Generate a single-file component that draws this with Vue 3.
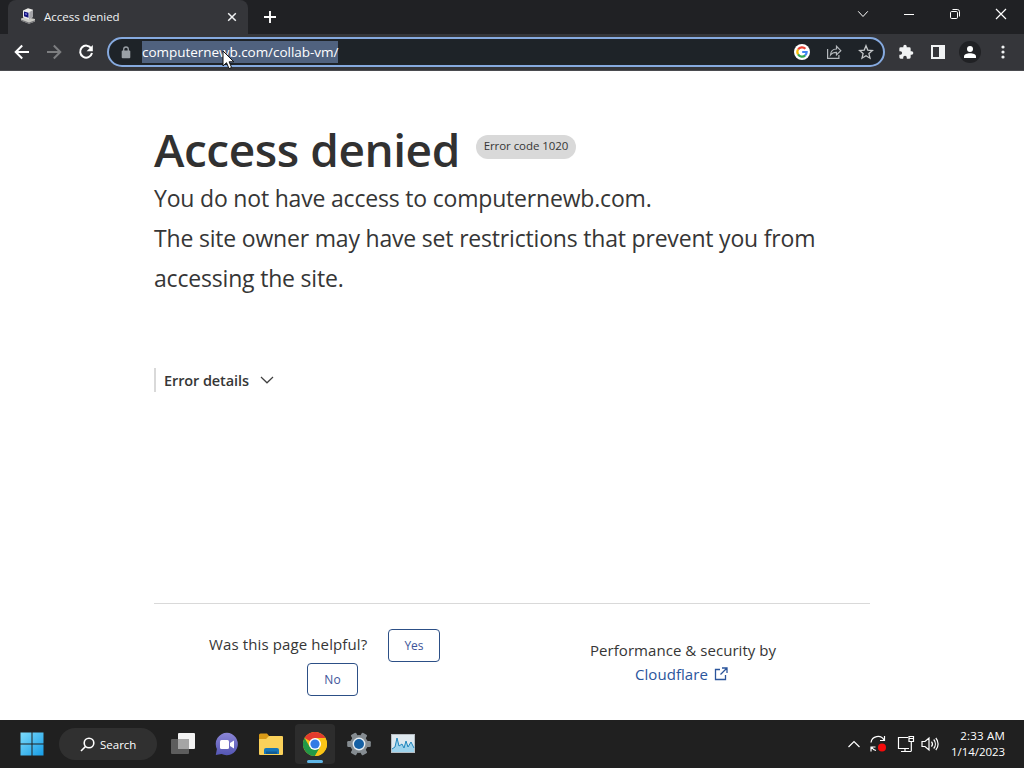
<template>
  <div class="screen">
    <header class="tabstrip">
      <div class="tab">
        <svg class="favicon" width="16" height="16" viewBox="0 0 16 16">
          <path d="M1 10.500l5-1.500 9 2v2.500l-6 2.300-8-3.300z" fill="#c9c9c4" />
          <path d="M1 11.500l8 3v1.300l-8-3zM9 14.500l6-2.300v1.300l-6 2.300z" fill="#77777a" />
          <path d="M3 2.500L8 .3l5 1.500v7L9 11.500 3 9.500z" fill="#ececea" />
          <path d="M9.500 4l3.500-2v7l-4 2.500z" fill="#a4a4a8" />
          <path d="M4 3.500l4.500 1.200v5L4 8.300z" fill="#15157c" />
          <path d="M5 5l2 .5v1.500L5 6.500z" fill="#7373df" />
        </svg>
        <span class="tab-title">Access denied</span>
        <svg class="tab-close" width="10" height="10" viewBox="0 0 10 10">
          <path d="M1.200 1.200l7.600 7.600M8.800 1.200L1.200 8.800" stroke="#f1f3f4" stroke-width="1.500" />
        </svg>
      </div>
      <svg class="new-tab" width="14" height="14" viewBox="0 0 14 14">
        <path d="M7 1v12M1 7h12" stroke="#fff" stroke-width="1.900" />
      </svg>
      <div class="window-controls">
        <span>
          <svg width="12" height="12" viewBox="0 0 12 12"><path d="M1.200 3.300L6 8.500l4.800-5.200" /></svg>
        </span>
        <span>
          <svg width="12" height="12" viewBox="0 0 12 12"><path d="M1 6.500h10" /></svg>
        </span>
        <span>
          <svg width="12" height="12" viewBox="0 0 12 12">
            <rect x="1.500" y="3.500" width="7" height="7" rx="1.200" />
            <path d="M3.500 1.500h4.800a2.200 2.200 0 0 1 2.200 2.200V8.500" />
          </svg>
        </span>
        <span>
          <svg width="12" height="12" viewBox="0 0 12 12"><path d="M1 1l10 10M11 1L1 11" stroke-width="1.200" /></svg>
        </span>
      </div>
    </header>

    <div class="toolbar">
      <div class="nav">
        <svg width="16" height="16" viewBox="0 0 16 16">
          <path d="M15 8H2M8.200 1.500L1.700 8l6.500 6.500" fill="none" stroke="#fff" stroke-width="2" />
        </svg>
        <svg width="16" height="16" viewBox="0 0 16 16">
          <path d="M1 8h13M7.800 1.500L14.300 8l-6.500 6.500" fill="none" stroke="#7d7e80" stroke-width="2" />
        </svg>
        <svg width="16" height="16" viewBox="0 0 16 16">
          <path d="M13.300 4.500A6 6 0 1 0 14 9" fill="none" stroke="#fff" stroke-width="2" />
          <path d="M14.800 1v6.200H8.600z" fill="#fff" />
        </svg>
      </div>
      <div class="omnibox">
        <svg class="lock" width="10" height="13" viewBox="0 0 10 13">
          <rect x=".7" y="4.600" width="8.600" height="7.600" rx="1" fill="#9aa0a6" />
          <path d="M2.700 5V3.300a2.300 2.300 0 0 1 4.600 0V5" fill="none" stroke="#9aa0a6" stroke-width="1.300" />
        </svg>
        <span class="url">computernewb.com/collab-vm/</span>
        <div class="omnibox-actions">
          <svg width="16" height="16" viewBox="0 0 16 16">
            <circle cx="8" cy="8" r="8" fill="#fff" />
            <g fill="none" stroke-width="2.200">
              <path d="M4.070 5.500A4.650 4.650 0 0 1 11.400 4.800" stroke="#ea4335" />
              <path d="M4.070 10.400A4.650 4.650 0 0 1 4.070 5.500" stroke="#fbbc05" />
              <path d="M11.200 11.400A4.650 4.650 0 0 1 4.070 10.400" stroke="#34a853" />
              <path d="M8.200 8h4.450A4.650 4.650 0 0 1 11.100 11.500" stroke="#4285f4" />
            </g>
          </svg>
          <svg width="16" height="16" viewBox="0 0 16 16" fill="none" stroke="#b4b8bc" stroke-width="1.200">
            <path d="M1.600 5v9.400h11.300V11" />
            <path d="M4.500 11c.3-4 2.500-6 6-6V2.300L14.800 6.700l-4.300 4.200V8.300C7.800 8.200 6 9 4.500 11z" />
          </svg>
          <svg width="16" height="16" viewBox="0 0 16 16">
            <path
              d="M8 1.700l1.750 4.400 4.750.4-3.600 3.100 1.100 4.600L8 11.700l-4 2.500 1.100-4.600-3.600-3.100 4.750-.4z"
              fill="none"
              stroke="#c5c8ca"
              stroke-width="1.300"
            />
          </svg>
        </div>
      </div>
      <div class="extensions">
        <svg width="16" height="16" viewBox="0 0 24 24">
          <path
            d="M20.500 11H19V7a2 2 0 0 0-2-2h-4V3.500a2.500 2.500 0 0 0-5 0V5H4a2 2 0 0 0-2 2v3.800h1.500a2.700 2.700 0 0 1 0 5.400H2V20a2 2 0 0 0 2 2h3.800v-1.500a2.700 2.700 0 0 1 5.400 0V22H17a2 2 0 0 0 2-2v-4h1.500a2.500 2.500 0 0 0 0-5z"
            fill="#f1f3f4"
          />
        </svg>
        <svg width="16" height="16" viewBox="0 0 16 16">
          <path d="M1 1h14v14H1zM3 3v10h6V3z" fill="#f1f3f4" fill-rule="evenodd" />
        </svg>
        <span class="avatar">
          <svg width="14" height="14" viewBox="0 0 14 14" fill="#fff">
            <circle cx="7" cy="4" r="3" />
            <path d="M1 13v-1.500C1 9 4 8.200 7 8.200s6 .8 6 3.300V13z" />
          </svg>
        </span>
        <svg class="menu" width="16" height="16" viewBox="0 0 16 16" fill="#f1f3f4">
          <circle cx="8" cy="3" r="1.600" />
          <circle cx="8" cy="8" r="1.600" />
          <circle cx="8" cy="13" r="1.600" />
        </svg>
      </div>
    </div>

    <main class="page">
      <div class="heading">
        <h1>Access denied</h1>
        <span class="code">Error code 1020</span>
      </div>
      <p>You do not have access to computernewb.com.</p>
      <p>The site owner may have set restrictions that prevent you from</p>
      <p>accessing the site.</p>

      <div class="details">
        <span>Error details</span>
        <svg width="14" height="8" viewBox="0 0 14 8">
          <path d="M1 1l6 5.800L13 1" fill="none" stroke="#404040" stroke-width="1.200" />
        </svg>
      </div>

      <footer>
        <div class="feedback">
          <div class="feedback-row">
            <span class="question">Was this page helpful?</span>
            <button class="yes">Yes</button>
          </div>
          <button class="no">No</button>
        </div>
        <div class="credits">
          <span>Performance &amp; security by</span>
          <a>
            <span>Cloudflare</span>
            <svg width="14" height="14" viewBox="0 0 14 14" fill="none" stroke="#2b559c" stroke-width="1.300">
              <path d="M6 2.500H1.500v10h10V8M8 1h5v5M13 1L6.500 7.500" />
            </svg>
          </a>
        </div>
      </footer>
    </main>

    <div class="taskbar">
      <svg class="start" width="24" height="24" viewBox="0 0 24 24">
        <defs>
          <linearGradient id="win" x1="0" y1="0" x2="24" y2="24" gradientUnits="userSpaceOnUse">
            <stop offset="0" stop-color="#7fdcfa" />
            <stop offset="1" stop-color="#149be6" />
          </linearGradient>
        </defs>
        <path d="M.5.500h11v11H.5zM12.500.500h11v11h-11zM.5 12.500h11v11H.5zM12.500 12.500h11v11h-11z" fill="url(#win)" />
      </svg>
      <div class="search">
        <svg width="15" height="15" viewBox="0 0 15 15" fill="none" stroke="#fff" stroke-width="1.600">
          <circle cx="9" cy="6" r="4.800" />
          <path d="M5.500 9.500L1 14" />
        </svg>
        <span>Search</span>
      </div>
      <div class="apps">
        <span class="app">
          <svg width="26" height="24" viewBox="0 0 26 24">
            <rect x="8" y="1" width="17" height="16" rx="1" fill="#f2f2f2" />
            <rect x="1" y="7" width="18" height="15" rx="1" fill="#5d5d5d" />
            <path d="M8 7h11v10H8z" fill="#a5a5a5" />
          </svg>
        </span>
        <span class="app">
          <svg width="24" height="24" viewBox="0 0 24 24">
            <defs>
              <linearGradient id="chat" x2="0" y2="1">
                <stop offset="0" stop-color="#8b85d5" />
                <stop offset="1" stop-color="#5456b4" />
              </linearGradient>
            </defs>
            <path d="M12 .8A11.200 11.200 0 1 1 6.600 22L.8 23l1.100-6A11.200 11.200 0 0 1 12 .8z" fill="url(#chat)" />
            <rect x="5" y="8" width="9" height="9" rx="1.500" fill="#fff" />
            <path d="M15 11l4-2.500v8L15 14z" fill="#fff" />
          </svg>
        </span>
        <span class="app">
          <svg width="26" height="24" viewBox="0 0 26 24">
            <path d="M1 3a1.500 1.500 0 0 1 1.500-1.500H9l2.500 3V9H1z" fill="#d99a16" />
            <path d="M1 7h7l3-3h13a1 1 0 0 1 1 1v17a1 1 0 0 1-1 1H2a1 1 0 0 1-1-1z" fill="#fad15a" />
            <path d="M6 22v-4a2 2 0 0 1 2-2h11a2 2 0 0 1 2 2v4z" fill="#1676b9" />
            <path d="M8 19.500h11V22H8z" fill="#115b94" />
          </svg>
        </span>
        <span class="app active">
          <svg width="24" height="24" viewBox="0 0 24 24">
            <circle cx="12" cy="12" r="12" fill="#fbc516" />
            <path d="M12 12L1.600 6A12 12 0 0 1 22.400 6z" fill="#e33b2e" />
            <path d="M1.600 6A12 12 0 0 0 12 24l5.200-9L12 12 6.800 15z" fill="#229847" />
            <path d="M12 6h10.400A12 12 0 0 1 12 24l5.200-9z" fill="#fbc516" />
            <circle cx="12" cy="12" r="6" fill="#fff" />
            <circle cx="12" cy="12" r="4.600" fill="#337be5" />
          </svg>
        </span>
        <span class="app">
          <svg width="24" height="24" viewBox="0 0 24 24">
            <g fill="#858c91">
              <rect v-for="n in 3" :key="n" x="9" y=".2" width="6" height="23.600" rx="1.200" :transform="`rotate(${gearAngle(n)} 12 12)`" />
              <circle cx="12" cy="12" r="9" />
            </g>
            <circle cx="12" cy="12" r="6.400" fill="#e6edf3" />
            <circle cx="12" cy="12" r="5" fill="#145fa3" />
          </svg>
        </span>
        <span class="app">
          <svg width="24" height="20" viewBox="0 0 24 20">
            <rect x=".5" y=".5" width="23" height="18" fill="#dfe9ef" stroke="#b7bec3" />
            <path d="M1 15l3-2 2-9 2 8 3-2 2 4 2-7 2 6 3-5 3 6v4H1z" fill="#9ed3ec" />
            <path d="M1 15l3-2 2-9 2 8 3-2 2 4 2-7 2 6 3-5 3 6" fill="none" stroke="#2287bd" />
          </svg>
        </span>
      </div>

      <div class="tray">
        <svg width="14" height="8" viewBox="0 0 14 8"><path d="M1.500 7L7 1.500 12.500 7" /></svg>
        <svg class="update" width="18" height="18" viewBox="0 0 18 18">
          <path d="M2 7.500A7 7 0 0 1 15 5M15.500 1v4.500H11M7 15.500A7 7 0 0 1 2.500 12M2 16.500V12h4.500" />
          <circle cx="13" cy="12.500" r="4" fill="#f40b0b" stroke="none" />
        </svg>
        <svg class="network" width="18" height="18" viewBox="0 0 18 18">
          <path d="M11 2.500H1.500v11h10.500M4 16.500h10M8 13.500v3M12 1.500h4.500v5H12zM14.300 6.500v10M12 3.500h4.500" />
        </svg>
        <svg width="18" height="16" viewBox="0 0 18 16">
          <path d="M1 5.500h3L8 2v12l-4-3.500H1zM10.500 5.500a4 4 0 0 1 0 5M12.700 3.500a7 7 0 0 1 0 9M14.800 2a9 9 0 0 1 0 12" />
        </svg>
      </div>
      <div class="clock">
        <span class="time">2:33 AM</span>
        <span class="date">1/14/2023</span>
      </div>
    </div>

    <svg class="cursor" width="13" height="20" viewBox="0 0 13 20">
      <path d="M1 1v15l3.500-3.300L7 18.600l2.600-1.100-2.500-5.700h4.700z" fill="#fff" stroke="#111" />
    </svg>
  </div>
</template>

<script setup>
// three bars through the centre make the six teeth of the gear
const gearAngle = (n) => n * 60 + 30;
</script>

<style>
body {
  margin: 0;
  overflow: hidden;
}
</style>

<style scoped>
.screen {
  position: relative;
  display: flex;
  flex-direction: column;
  width: 1024px;
  height: 768px;
  overflow: hidden;
  background: #fff;
  color: #363636;
  font-family: "Open Sans", "Noto Sans", sans-serif;
  white-space: nowrap;
}
svg {
  display: block;
  flex: none;
}

.tabstrip {
  display: flex;
  height: 34px;
  background: #202124;
}
.tab {
  display: flex;
  align-items: center;
  box-sizing: border-box;
  width: 240px;
  margin-left: 8px;
  padding: 0 11px 0 12px;
  background: #35363a;
  border-radius: 8px 8px 0 0;
  color: #f1f3f4;
}
.tab-title {
  margin: -2px 0 0 8px;
  font-size: 11.5px;
}
.favicon {
  margin-top: -2px;
}
.tab-close {
  margin-left: auto;
}
.new-tab {
  margin: 10px 0 0 15px;
}
.window-controls {
  display: flex;
  margin-left: auto;
  height: 28px;
}
.window-controls span {
  display: flex;
  align-items: center;
  justify-content: center;
  width: 46px;
}
.window-controls svg {
  fill: none;
  stroke: #fff;
}

.toolbar {
  display: flex;
  align-items: center;
  height: 36px;
  background: #35363a;
  border-bottom: 1px solid #4a4b4f;
}
.nav {
  display: flex;
  gap: 16px;
  padding-left: 14px;
}
.omnibox {
  display: flex;
  align-items: center;
  box-sizing: border-box;
  width: 778px;
  height: 30px;
  margin-left: 13px;
  padding: 0 9px 0 12px;
  border: 2px solid #86aadf;
  border-radius: 15px;
  background: #1e2328;
}
.url {
  margin-left: 11px;
  height: 22px;
  line-height: 22px;
  font-size: 13.5px;
  letter-spacing: -0.04px;
  background: #50627f;
  color: #fff;
}
.omnibox-actions {
  display: flex;
  gap: 16px;
  margin-left: auto;
}
.extensions {
  display: flex;
  align-items: center;
  gap: 16px;
  margin-left: 13px;
}
.avatar {
  display: flex;
  align-items: center;
  justify-content: center;
  width: 22px;
  height: 22px;
  margin: 0 -3px;
  border-radius: 50%;
  background: #202124;
}
.menu {
  margin-left: 1px;
}

.page {
  display: flex;
  flex-direction: column;
  height: 649px;
  padding: 0 154px;
}
.heading {
  display: flex;
  align-items: flex-start;
  height: 60px;
  margin-top: 48px;
}
h1 {
  margin: 0;
  width: 322px;
  color: #313131;
  font-size: 46px;
  font-weight: 600;
  letter-spacing: -0.45px;
  line-height: 60px;
}
.code {
  box-sizing: border-box;
  width: 100px;
  height: 24px;
  margin-top: 16px;
  border-radius: 12px;
  background: #d9d9d9;
  font-size: 11.5px;
  letter-spacing: -0.06px;
  line-height: 22px;
  text-align: center;
}
p {
  margin: 0;
  font-size: 23px;
  letter-spacing: -0.19px;
  line-height: 39px;
  height: 40px;
}
.details {
  display: flex;
  align-items: center;
  height: 24px;
  margin-top: 69px;
  padding-left: 8px;
  border-left: 2px solid #d9d9d9;
  font-size: 14.5px;
  font-weight: 600;
  letter-spacing: -0.1px;
}
.details span {
  width: 96px;
}
footer {
  display: flex;
  width: 716px;
  margin-top: 211px;
  border-top: 1px solid #d9d9d9;
}
.feedback {
  display: flex;
  flex-direction: column;
  margin: 25px 0 0 55px;
  width: 231px;
}
.feedback-row {
  display: flex;
}
.question {
  width: 179px;
  font-size: 15px;
  letter-spacing: 0.12px;
  line-height: 31px;
}
button {
  box-sizing: border-box;
  width: 52px;
  height: 33px;
  padding: 0;
  border: 1px solid #2c4f86;
  border-radius: 4px;
  background: #fff;
  color: #3d5499;
  font-family: inherit;
  font-size: 12px;
}
.no {
  width: 51px;
  margin: 1px 0 0 98px;
}
.credits {
  display: flex;
  flex-direction: column;
  align-items: flex-start;
  margin: 34px 0 0 150px;
  font-size: 15px;
  letter-spacing: 0.05px;
  line-height: 24px;
}
a {
  display: flex;
  align-items: center;
  margin-left: 45px;
  color: #2b559c;
}
a span {
  width: 79px;
}

.taskbar {
  display: flex;
  align-items: center;
  height: 48px;
  background: #202020;
  color: #fff;
}
.start {
  margin-left: 20px;
}
.search {
  display: flex;
  align-items: center;
  gap: 5px;
  box-sizing: border-box;
  width: 98px;
  height: 32px;
  margin-left: 15px;
  padding-left: 21px;
  border-radius: 16px;
  background: #303030;
  font-size: 11.5px;
}
.apps {
  display: flex;
  gap: 4px;
  margin-left: 6px;
}
.app {
  position: relative;
  display: flex;
  align-items: center;
  justify-content: center;
  width: 40px;
  height: 40px;
}
.active {
  border-radius: 4px;
  background: #2d2d2d;
}
.active::after {
  content: "";
  position: absolute;
  bottom: 1px;
  left: 12px;
  width: 16px;
  height: 3px;
  border-radius: 2px;
  background: #60b7e7;
}
.tray {
  display: flex;
  align-items: center;
  margin-left: auto;
}
.tray svg {
  fill: none;
  stroke: #fff;
  stroke-width: 1.2;
}
.update {
  margin-left: 8px;
}
.network {
  margin: 0 6px 0 10px;
}
.clock {
  display: flex;
  flex-direction: column;
  align-items: flex-end;
  width: 66px;
  margin-right: 19px;
  font-size: 11.5px;
  letter-spacing: -0.05px;
  line-height: 16px;
}
.time {
  letter-spacing: 0.2px;
}
.cursor {
  position: absolute;
  left: 222px;
  top: 50px;
}
</style>
